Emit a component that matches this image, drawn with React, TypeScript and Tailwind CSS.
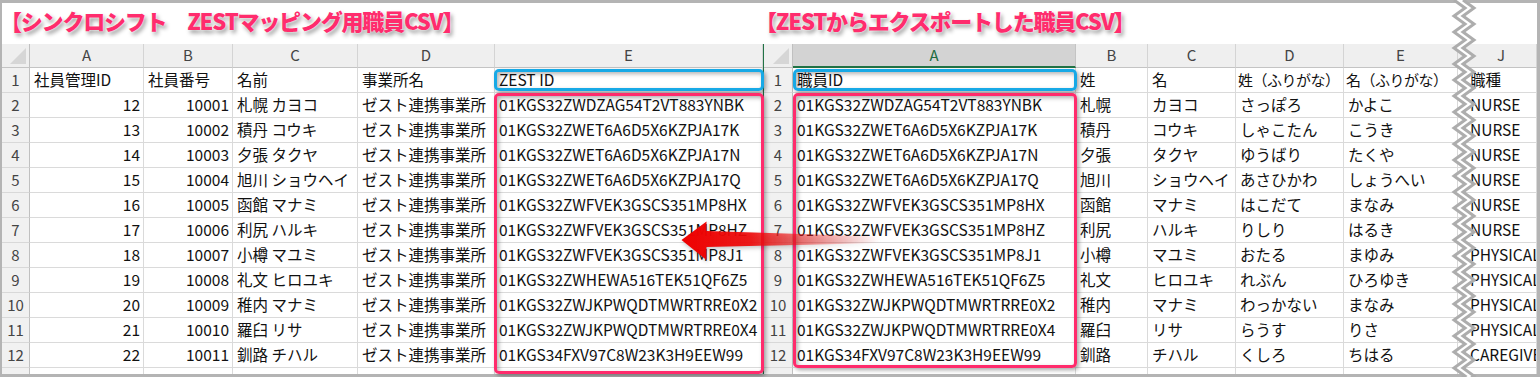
import type { ReactNode } from "react";

const leftRows = [
  ["12", "10001", "札幌 カヨコ", "ゼスト連携事業所", "01KGS32ZWDZAG54T2VT883YNBK"],
  ["13", "10002", "積丹 コウキ", "ゼスト連携事業所", "01KGS32ZWET6A6D5X6KZPJA17K"],
  ["14", "10003", "夕張 タクヤ", "ゼスト連携事業所", "01KGS32ZWET6A6D5X6KZPJA17N"],
  ["15", "10004", "旭川 ショウヘイ", "ゼスト連携事業所", "01KGS32ZWET6A6D5X6KZPJA17Q"],
  ["16", "10005", "函館 マナミ", "ゼスト連携事業所", "01KGS32ZWFVEK3GSCS351MP8HX"],
  ["17", "10006", "利尻 ハルキ", "ゼスト連携事業所", "01KGS32ZWFVEK3GSCS351MP8HZ"],
  ["18", "10007", "小樽 マユミ", "ゼスト連携事業所", "01KGS32ZWFVEK3GSCS351MP8J1"],
  ["19", "10008", "礼文 ヒロユキ", "ゼスト連携事業所", "01KGS32ZWHEWA516TEK51QF6Z5"],
  ["20", "10009", "稚内 マナミ", "ゼスト連携事業所", "01KGS32ZWJKPWQDTMWRTRRE0X2"],
  ["21", "10010", "羅臼 リサ", "ゼスト連携事業所", "01KGS32ZWJKPWQDTMWRTRRE0X4"],
  ["22", "10011", "釧路 チハル", "ゼスト連携事業所", "01KGS34FXV97C8W23K3H9EEW99"],
];

const rightRows = [
  ["01KGS32ZWDZAG54T2VT883YNBK", "札幌", "カヨコ", "さっぽろ", "かよこ", "NURSE"],
  ["01KGS32ZWET6A6D5X6KZPJA17K", "積丹", "コウキ", "しゃこたん", "こうき", "NURSE"],
  ["01KGS32ZWET6A6D5X6KZPJA17N", "夕張", "タクヤ", "ゆうばり", "たくや", "NURSE"],
  ["01KGS32ZWET6A6D5X6KZPJA17Q", "旭川", "ショウヘイ", "あさひかわ", "しょうへい", "NURSE"],
  ["01KGS32ZWFVEK3GSCS351MP8HX", "函館", "マナミ", "はこだて", "まなみ", "NURSE"],
  ["01KGS32ZWFVEK3GSCS351MP8HZ", "利尻", "ハルキ", "りしり", "はるき", "NURSE"],
  ["01KGS32ZWFVEK3GSCS351MP8J1", "小樽", "マユミ", "おたる", "まゆみ", "PHYSICAL"],
  ["01KGS32ZWHEWA516TEK51QF6Z5", "礼文", "ヒロユキ", "れぶん", "ひろゆき", "PHYSICAL"],
  ["01KGS32ZWJKPWQDTMWRTRRE0X2", "稚内", "マナミ", "わっかない", "まなみ", "PHYSICAL"],
  ["01KGS32ZWJKPWQDTMWRTRRE0X4", "羅臼", "リサ", "らうす", "りさ", "PHYSICAL"],
  ["01KGS34FXV97C8W23K3H9EEW99", "釧路", "チハル", "くしろ", "ちはる", "CAREGIVER"],
];

function Cell({ children, right, tight }: { children?: ReactNode; right?: boolean; tight?: boolean }) {
  if (tight) {
    return (
      <div className="flex items-center overflow-hidden whitespace-nowrap border-r border-b border-[#dadada] bg-white pl-[2px] text-[15px] tracking-[-0.5px] text-[#111]">
        {children}
      </div>
    );
  }
  return (
    <div
      className={
        right
          ? "flex items-center justify-end overflow-hidden whitespace-nowrap border-r border-b border-[#dadada] bg-white pr-[3px] text-[15.5px] text-[#111]"
          : "flex items-center overflow-hidden whitespace-nowrap border-r border-b border-[#dadada] bg-white pl-[4px] text-[15.5px] text-[#111]"
      }
    >
      {children}
    </div>
  );
}

function ColHead({ label, selected }: { label: string; selected?: boolean }) {
  if (selected) {
    return (
      <div className="flex items-center justify-center border-r border-b-2 border-r-[#c4c4c4] border-b-[#217346] bg-[#d3d3d3] text-[15px] text-[#1d6b40]">
        {label}
      </div>
    );
  }
  return (
    <div className="flex items-center justify-center border-r border-b border-r-[#d4d4d4] border-b-[#c4c4c4] bg-[#efefef] text-[15px] text-[#444]">
      {label}
    </div>
  );
}

function RowHead({ n }: { n?: number }) {
  return (
    <div className="flex items-center justify-center border-r border-b border-r-[#c0c0c0] border-b-[#d8d8d8] bg-[#f1f1f1] text-[15px] text-[#444]">
      {n}
    </div>
  );
}

function Corner() {
  return (
    <div className="flex items-end justify-end border-r border-b border-r-[#c0c0c0] border-b-[#c4c4c4] bg-[#efefef] p-[3px]">
      <div className="h-[16px] w-[16px] bg-[#d6d6d6] [clip-path:polygon(100%_0,100%_100%,0_100%)]" />
    </div>
  );
}

function Title({ children }: { children: ReactNode }) {
  return (
    <div className="flex h-[41px] items-start whitespace-nowrap pt-[1px] text-[22px] font-black tracking-[-1.2px] text-[#ff2c6d] [text-shadow:0_0_2px_#fff,2px_3px_4px_rgba(0,0,0,0.4)]">
      {children}
    </div>
  );
}

function LeftSheet() {
  return (
    <div className="flex w-[761px] flex-col">
      <div className="-ml-[2px]">
        <Title>【シンクロシフト　ZESTマッピング用職員CSV】</Title>
      </div>
      <div className="grid grid-cols-[28px_114px_89px_125px_137px_268px] grid-rows-[24px_repeat(12,25px)_6px]">
        <Corner />
        {["A", "B", "C", "D", "E"].map((c) => (
          <ColHead key={c} label={c} />
        ))}
        <RowHead n={1} />
        <Cell>社員管理ID</Cell>
        <Cell>社員番号</Cell>
        <Cell>名前</Cell>
        <Cell>事業所名</Cell>
        <Cell>ZEST ID</Cell>
        {leftRows.map((r, i) => (
          <div key={i} className="contents">
            <RowHead n={i + 2} />
            <Cell right>{r[0]}</Cell>
            <Cell right>{r[1]}</Cell>
            <Cell>{r[2]}</Cell>
            <Cell>{r[3]}</Cell>
            <Cell>{r[4]}</Cell>
          </div>
        ))}
        <div className="border-r border-r-[#c0c0c0] bg-[#f1f1f1]" />
        {[0, 1, 2, 3, 4].map((k) => (
          <div key={k} className="border-r border-[#dadada]" />
        ))}
      </div>
    </div>
  );
}

function RightSheet() {
  return (
    <div className="flex w-[774px] flex-col">
      <div className="-ml-[8px]">
        <Title>【ZESTからエクスポートした職員CSV】</Title>
      </div>
      <div className="grid grid-cols-[29px_283px_72px_88px_108px_114px_8px_71px] grid-rows-[24px_repeat(12,25px)_6px] border-l border-[#217346]">
        <Corner />
        <ColHead label="A" selected />
        <ColHead label="B" />
        <ColHead label="C" />
        <ColHead label="D" />
        <ColHead label="E" />
        <ColHead label="" />
        <ColHead label="J" />
        <RowHead n={1} />
        <Cell>職員ID</Cell>
        <Cell>姓</Cell>
        <Cell>名</Cell>
        <Cell tight>姓（ふりがな）</Cell>
        <Cell tight>名（ふりがな）</Cell>
        <Cell />
        <Cell>職種</Cell>
        {rightRows.map((r, i) => (
          <div key={i} className="contents">
            <RowHead n={i + 2} />
            <Cell>{r[0]}</Cell>
            <Cell>{r[1]}</Cell>
            <Cell>{r[2]}</Cell>
            <Cell>{r[3]}</Cell>
            <Cell>{r[4]}</Cell>
            <Cell />
            <Cell>{r[5]}</Cell>
          </div>
        ))}
        <div className="border-r border-r-[#c0c0c0] bg-[#f1f1f1]" />
        {[0, 1, 2, 3, 4, 5, 6].map((k) => (
          <div key={k} className="border-r border-[#dadada]" />
        ))}
      </div>
    </div>
  );
}

function Zigzag() {
  const step = 8;
  const n = Math.ceil(377 / step) + 1;
  const left: string[] = [];
  const right: string[] = [];
  for (let i = 0; i <= n; i++) {
    const x = i % 2 === 0 ? 5 : 16;
    left.push(`${x},${i * step}`);
    right.push(`${x + 9},${i * step}`);
  }
  const fill = [...left, ...[...right].reverse()].join(" ");
  return (
    <svg className="absolute left-[1449px] top-0" width="32" height="377" viewBox="0 0 32 377">
      <polygon points={fill} fill="#fff" />
      <polyline points={left.join(" ")} fill="none" stroke="#adadad" strokeWidth="3" />
      <polyline points={right.join(" ")} fill="none" stroke="#adadad" strokeWidth="3" />
    </svg>
  );
}

function Arrow() {
  return (
    <svg
      className="absolute left-[676px] top-[215px] drop-shadow-[1px_2px_2px_rgba(0,0,0,0.25)]"
      width="210"
      height="50"
      viewBox="0 0 210 50"
    >
      <defs>
        <linearGradient id="arrowFade" x1="0" y1="0" x2="1" y2="0">
          <stop offset="0" stopColor="#ee0000" stopOpacity="1" />
          <stop offset="0.35" stopColor="#ee0a0a" stopOpacity="0.92" />
          <stop offset="1" stopColor="#f03030" stopOpacity="0" />
        </linearGradient>
      </defs>
      <polygon
        points="5.5,25 30.5,6.5 30.5,16 204,21.5 204,28 30.5,32 30.5,45"
        fill="url(#arrowFade)"
      />
    </svg>
  );
}

export default function App() {
  return (
    <div className="relative h-[377px] w-[1540px] overflow-hidden bg-white font-['Noto_Sans_CJK_JP',sans-serif]">
      <div className="flex h-full w-full border-t-[3px] border-r-[3px] border-b-[3px] border-l-[2px] border-[#b4b4b4]">
        <LeftSheet />
        <RightSheet />
      </div>

      <div className="absolute left-[494px] top-[69px] h-[22px] w-[270px] rounded-[5px] border-[3px] border-[#17a9e6] shadow-[2px_2px_4px_rgba(0,0,0,0.35),inset_2px_2px_4px_rgba(0,0,0,0.3)]" />
      <div className="absolute left-[494px] top-[93px] h-[281px] w-[270px] rounded-[5px] border-[3px] border-[#ff2b6c] shadow-[2px_2px_4px_rgba(0,0,0,0.35),inset_2px_2px_4px_rgba(0,0,0,0.3)]" />
      <div className="absolute left-[793px] top-[69px] h-[22px] w-[284px] rounded-[5px] border-[3px] border-[#17a9e6] shadow-[2px_2px_4px_rgba(0,0,0,0.35),inset_2px_2px_4px_rgba(0,0,0,0.3)]" />
      <div className="absolute left-[793px] top-[93px] h-[275px] w-[284px] rounded-[5px] border-[3px] border-[#ff2b6c] shadow-[2px_2px_4px_rgba(0,0,0,0.35),inset_2px_2px_4px_rgba(0,0,0,0.3)]" />

      <Arrow />
      <Zigzag />
    </div>
  );
}
